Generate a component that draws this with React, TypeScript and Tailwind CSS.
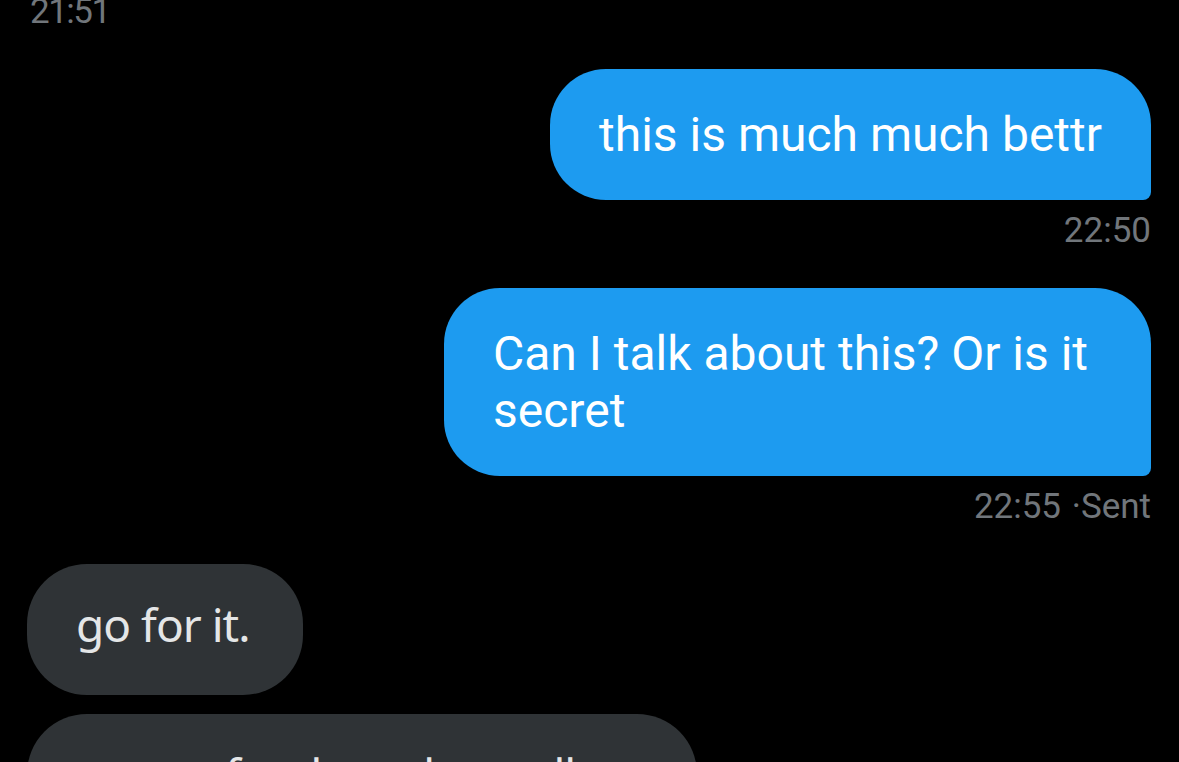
export default function App() {
  const timeCls =
    "h-10 leading-10 text-[35px] text-[#71767b] font-['Roboto',_'Liberation_Sans',_sans-serif] whitespace-nowrap";
  const blueCls =
    "bg-[#1d9bf0] rounded-[56px] rounded-br-[8px] px-[49px] py-[37px] text-white text-[48px] leading-[57px] max-w-[707px] font-['Roboto',_'Liberation_Sans',_sans-serif]";
  const grayCls =
    "bg-[#2f3336] rounded-[60px] pl-[49px] pr-[53px] pt-[32px] pb-[42px] text-[#e4e6e7] text-[46px] leading-[57px] tracking-[-1px] font-normal font-['Noto_Sans',_'Open_Sans',_sans-serif]";
  return (
    <div className="h-screen w-full overflow-hidden bg-black">
      <div className="-mt-2 flex flex-col pl-[27px] pr-[28px]">
        <div className={`${timeCls} pl-[3px] tracking-[-1.5px]`}>21:51</div>

        <div className="mt-[37px] flex justify-end">
          <div className={blueCls}>this is much much bettr</div>
        </div>
        <div className={`${timeCls} mt-[11px] text-right`}>22:50</div>

        <div className="mt-[37px] flex justify-end">
          <div className={blueCls}>Can I talk about this? Or is it secret</div>
        </div>
        <div className={`${timeCls} mt-[11px] text-right`}>
          22:55 <span className="ml-[2px]">·</span>Sent
        </div>

        <div className="mt-[37px] flex justify-start">
          <div className={grayCls}>go for it.</div>
        </div>
        <div className="mt-[19px] flex justify-start">
          <div className={`${grayCls} w-[670px]`}>
            we are fond, so share all you want about it
          </div>
        </div>
      </div>
    </div>
  );
}
